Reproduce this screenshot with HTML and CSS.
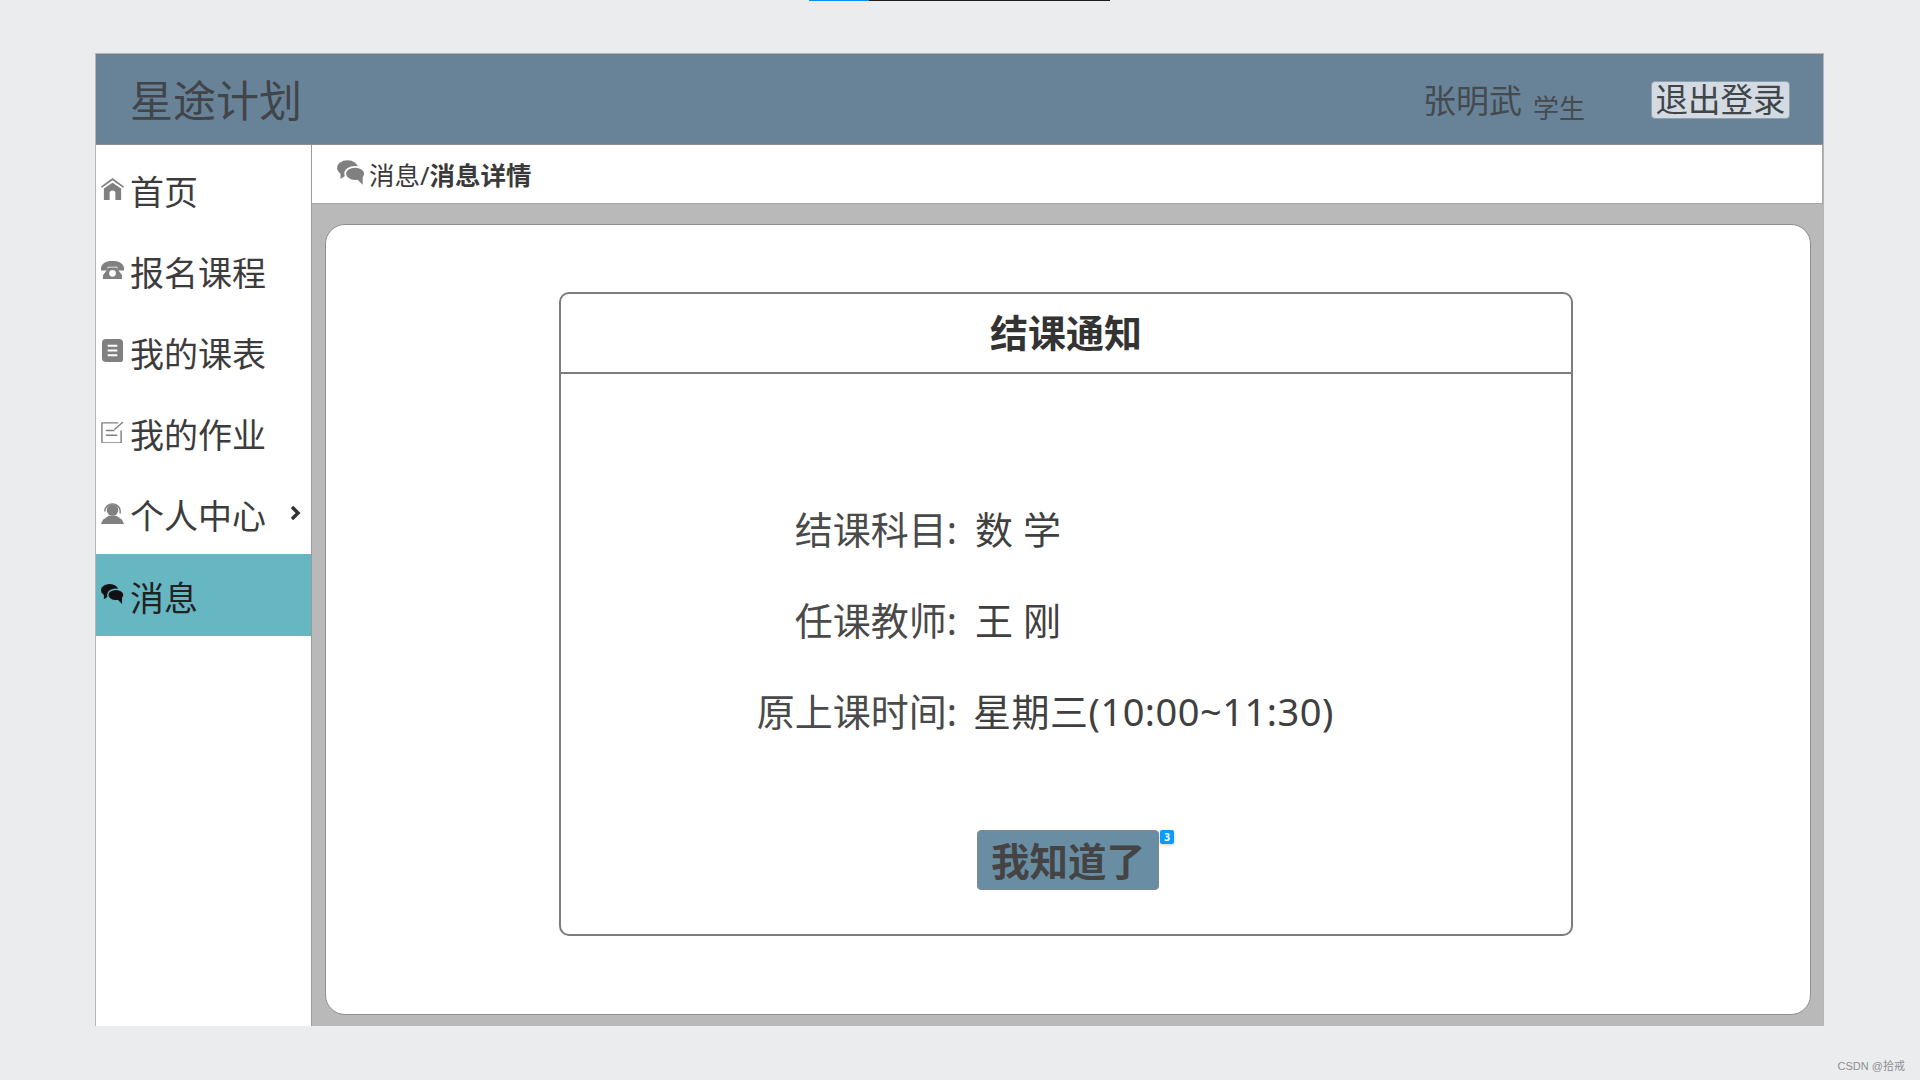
FILE: index.html
```html
<!DOCTYPE html>
<html lang="zh-CN">
<head>
<meta charset="utf-8">
<title>星途计划</title>
<link rel="stylesheet" href="styles.css">
</head>
<body>
<div class="progress"><span class="progress-done"></span><span class="progress-rest"></span></div>
<div class="app">
  <header class="topbar">
    <div class="brand">星途计划</div>
    <div class="user"><span class="user-name">张明武</span><span class="user-role">学生</span></div>
    <button class="logout">退出登录</button>
  </header>
  <div class="body">
    <nav class="side">
      <div class="nav-item"><svg class="nav-icon" viewBox="0 0 24 24"><path class="fill" d="M12 1 0 10l1 1.200L12 3.500l11 7.700 1-1.200z"/><path class="fill" d="M12 6 3 12v12h6v-7a3 3 0 0 1 6 0v7h6V12z"/></svg><span>首页</span></div>
      <div class="nav-item"><svg class="nav-icon" viewBox="0 0 24 24"><path class="fill" d="M0 10C1 5 6 3 12 3s11 2 12 7v3h-7V9H7v4H0z"/><path class="fill" fill-rule="evenodd" d="M8 10h8l6 8v4H2v-4zM12 12.500a3.500 3.500 0 1 0 0 7 3.500 3.500 0 0 0 0-7z"/></svg><span>报名课程</span></div>
      <div class="nav-item"><svg class="nav-icon" viewBox="0 0 24 24"><path class="fill" fill-rule="evenodd" d="M5 0h14a4 4 0 0 1 4 4v17a3 3 0 0 1-3 3H5a4 4 0 0 1-4-3V4a4 4 0 0 1 4-4zm2 6v2h10V6zm0 5v2h10v-2zm0 5v2h10v-2z"/></svg><span>我的课表</span></div>
      <div class="nav-item"><svg class="nav-icon" viewBox="0 0 24 24"><path class="line" d="M18 3H1v21h20V11"/><path class="line" d="M5 11h9M5 16h12M14 10l9-8"/></svg><span>我的作业</span></div>
      <div class="nav-item"><svg class="nav-icon" viewBox="0 0 24 24"><path class="line" d="M4 11a8 8 0 0 1 16 0v2"/><circle class="fill" cx="12" cy="9.500" r="6"/><path class="fill" d="M8 15.500h8l6 4 2 4.500H0l2-4.500z"/></svg><span>个人中心</span><svg class="chevron" viewBox="0 0 12 16"><path d="M3 2l6 6-6 6"/></svg></div>
      <div class="nav-item active"><svg class="nav-icon chat" viewBox="0 0 24 24"><ellipse cx="9" cy="8.500" rx="9" ry="6.500"/><path d="M3 12v6l6-4z"/><ellipse class="front" cx="15.500" cy="13.500" rx="8.500" ry="6"/><path d="M17 18l5 5v-7z"/></svg><span>消息</span></div>
    </nav>
    <main class="main">
      <div class="crumb"><svg class="crumb-icon chat" viewBox="0 0 24 24"><ellipse cx="9" cy="8.500" rx="9" ry="6.500"/><path d="M3 12v6l6-4z"/><ellipse class="front" cx="15.500" cy="13.500" rx="8.500" ry="6"/><path d="M17 18l5 5v-7z"/></svg><span>消息/</span><strong>消息详情</strong></div>
      <div class="stage">
        <section class="sheet">
          <div class="notice">
            <h1 class="notice-title">结课通知</h1>
            <div class="notice-body">
              <dl class="facts">
                <div class="fact"><dt>结课科目:</dt><dd>数 学</dd></div>
                <div class="fact"><dt>任课教师:</dt><dd>王 刚</dd></div>
                <div class="fact"><dt>原上课时间:</dt><dd class="tight">星期三(10:00~11:30)</dd></div>
              </dl>
              <button class="ack">我知道了<span class="badge">3</span></button>
            </div>
          </div>
        </section>
      </div>
    </main>
  </div>
</div>
<div class="mark">CSDN @拾戒</div>
</body>
</html>
```
FILE: styles.css
```css
* { box-sizing: border-box; }
html, body { margin: 0; height: 100%; }
body {
  background: #ebecee;
  color: #3f3f3f;
  font-family: "Noto Sans", "Noto Sans CJK SC", sans-serif;
  height: 1080px;
  overflow: hidden;
  position: relative;
  padding-top: 53px;
}
.progress {
  position: absolute;
  top: 0;
  left: 809px;
  display: flex;
  height: 1px;
}
.progress-done { width: 60px; background: #0a8cf0; }
.progress-rest { width: 241px; background: #1c1c1c; }
.app {
  width: 1729px;
  height: 973px;
  margin-left: 95px;
  border: 1px solid #b5b5b5;
  border-bottom: 0;
  display: flex;
  flex-direction: column;
  background: #fff;
}
.topbar {
  height: 91px;
  flex: none;
  background: #688398;
  border-bottom: 1px solid #8a8f93;
  display: flex;
  align-items: center;
  padding: 0 33px 0 34px;
}
.brand {
  font-size: 43px;
  line-height: 1;
  flex: 1;
  margin-top: 2px;
  color: #414549;
}
.user { display: flex; align-items: baseline; margin-right: 66px; color: #454a4e; }
.user-name { font-size: 33px; position: relative; left: 2px; }
.user-role { font-size: 26px; margin-left: 13px; position: relative; top: 5px; }
.logout {
  width: 139px;
  height: 38px;
  padding: 0;
  background: #d3dae2;
  border: 1px solid #8ea0ae;
  border-radius: 4px;
  color: #3f4549;
  font: 32.500px/36px "Noto Sans", "Noto Sans CJK SC", sans-serif;
  margin-top: 1px;
  white-space: nowrap;
}
.body { flex: 1; display: flex; min-height: 0; }
.side {
  width: 216px;
  flex: none;
  background: #fff;
  border-right: 1px solid #9a9a9a;
  padding-top: 4px;
}
.nav-item {
  height: 81px;
  display: flex;
  align-items: center;
  font-size: 34px;
  padding: 2px 0 0 34px;
  position: relative;
  color: #3c3c3c;
}
.nav-item.active { height: 82px; background: #67b7c3; color: #222; }
.nav-icon {
  position: absolute;
  left: 5px;
  top: 28px;
  width: 23px;
  height: 23px;
  fill: #808080;
  stroke: none;
}
.nav-icon .fill { fill: #808080; }
.nav-icon .line { fill: none; stroke: #808080; stroke-width: 1.500; }
.active .nav-icon { fill: #111; }
.chat .front { stroke: #fff; stroke-width: 1.500; }
.active .chat .front { stroke: #67b7c3; }
.chevron {
  position: absolute;
  left: 193px;
  top: 32px;
  width: 12px;
  height: 16px;
  fill: none;
  stroke: #333;
  stroke-width: 3.500;
}
.main { flex: 1; display: flex; flex-direction: column; min-width: 0; }
.crumb {
  height: 59px;
  flex: none;
  background: #fff;
  border-right: 1px solid #a5a5a5;
  border-bottom: 1px solid #a5a5a5;
  display: flex;
  align-items: center;
  padding: 0 0 2px 25px;
  font-size: 25.500px;
  color: #3a3a3a;
}
.crumb strong { font-weight: 700; }
.crumb-icon { width: 28px; height: 28px; fill: #808080; margin-right: 4px; margin-top: -2px; }
.stage {
  flex: 1;
  background: #b9b9b9;
  padding: 20px 12px 11px 13px;
  display: flex;
  min-height: 0;
}
.sheet {
  flex: 1;
  background: #fff;
  border: 1px solid #8f8f8f;
  border-radius: 20px;
  padding: 67px 237px 78px 233px;
  display: flex;
}
.notice {
  flex: 1;
  border: 2px solid #7c7c7c;
  border-radius: 10px;
  display: flex;
  flex-direction: column;
}
.notice-title {
  margin: 0;
  height: 80px;
  border-bottom: 2px solid #7c7c7c;
  display: flex;
  align-items: center;
  justify-content: center;
  font-size: 38px;
  line-height: 1;
  font-weight: 700;
  color: #333;
  padding-bottom: 2px;
}
.notice-body { flex: 1; position: relative; padding-top: 126px; }
.facts { margin: 0; }
.fact { display: flex; height: 91px; align-items: flex-start; font-size: 38px; line-height: 58px; color: #404040; }
.fact dt { width: 396px; text-align: right; flex: none; color: #4a4a4a; }
.fact dd { margin: 0 0 0 18px; }
.fact dd.tight { margin-left: 16px; letter-spacing: .5px; }
.ack {
  position: absolute;
  left: 416px;
  top: 456px;
  width: 182px;
  height: 60px;
  padding: 0;
  background: #698da3;
  border: 1px solid #7f8a90;
  border-radius: 4px;
  color: #444;
  font: 700 38.500px/60px "Noto Sans", "Noto Sans CJK SC", sans-serif;
}
.badge {
  position: absolute;
  right: -16px;
  top: -1px;
  width: 14px;
  height: 14px;
  border-radius: 2px;
  background: #0a9bff;
  color: #fff;
  font: 700 10px/14px "Noto Sans", sans-serif;
  text-align: center;
  box-shadow: 0 1px 3px rgba(0,0,0,.2);
}
.mark {
  position: absolute;
  right: 15px;
  bottom: 6px;
  font-size: 11px;
  line-height: 15px;
  color: #8d8f91;
  font-family: "Liberation Sans", "Noto Sans CJK SC", sans-serif;
}
```
